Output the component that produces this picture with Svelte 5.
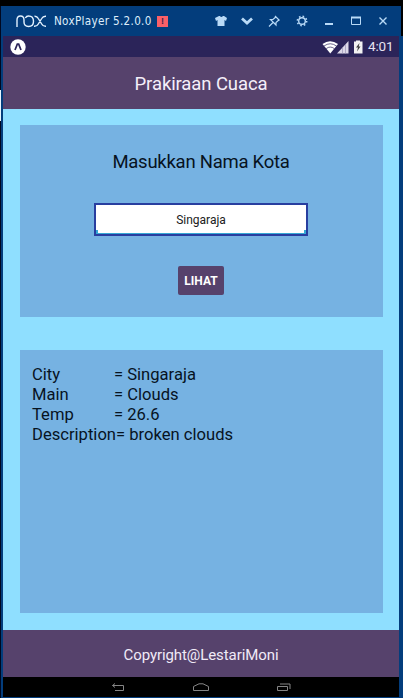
<script>
  let city = $state('Singaraja');
  const rows = [
    ['City', 'Singaraja'],
    ['Main', 'Clouds'],
    ['Temp', '26.6'],
    ['Description', 'broken clouds']
  ];
</script>

<div class="window">
  <div class="titlebar">
    <svg class="logo" width="31" height="13" viewBox="0 0 31 13" fill="none" stroke="#e4f2ff" stroke-width="1.4">
      <path d="M1 12V5Q1 1 4.500 1Q8 1 8 5V7Q8 11.500 12.500 11.500Q17.500 11.500 17.500 6.300Q17.500 1 12.500 1Q10.500 1 9.300 3" />
      <path d="M18.500 1.200Q21 1 22.300 3.500L25.700 9Q27 11.500 30 11.300M30 1.200Q27 1 25.700 3.500L22.300 9Q21 11.500 18 11.300" />
    </svg>
    <span class="name">NoxPlayer 5.2.0.0</span>
    <span class="alert">!</span>
    <svg class="tools" width="176" height="14" viewBox="214 14 176 14" fill="none" stroke="#b9daf7" stroke-width="1.4">
      <path d="M215 18L219 16H220Q221 18 223 16H224L227 18L226 21L224.500 20V26H217.500V20L216 21Z" fill="#b9daf7" stroke="none" />
      <path d="M242 18.500L247 23L252 18.500" stroke-width="2.8" />
      <path d="M275 16L279.500 20.500M275.800 17L273 19.500H270.500L276 25V22.500L278.800 20M273 22.500L269 26.500" stroke-width="1.2" />
      <circle cx="302" cy="21" r="3.300" />
      <circle cx="302" cy="21" r="4.700" stroke-dasharray="1.6 2.09" stroke-width="1.5" />
      <path d="M325 24H333" stroke-width="2" />
      <path d="M351.500 17V24.500H360.500V17" stroke-width="1" />
      <path d="M351 17.500H361" stroke-width="2" />
      <path d="M379.500 17.500L386.500 24.500M386.500 17.500L379.500 24.500" />
    </svg>
  </div>

  <div class="screen">
    <div class="status">
      <svg width="16" height="16" viewBox="0 0 16 16">
        <circle cx="8" cy="8" r="7.700" fill="#fff" />
        <path d="M5 11L7.300 5.200H8.700L11 11" fill="none" stroke="#2b2459" stroke-width="1.700" />
      </svg>
      <svg class="signals" width="41" height="14" viewBox="323 39 41 14">
        <path d="M323.500 43Q331 37.500 339 43L331.300 52.500Z" fill="#fff" />
        <path d="M325 45Q331.300 40.500 337.500 45M327.200 47.600Q331.300 44.500 335.300 47.600" fill="none" stroke="#2b2459" stroke-width=".7" />
        <path d="M338 52.500L349.500 40V52.500Z" fill="#dcd8e8" />
        <path d="M343.500 46V53M346.500 43V53" stroke="#8f89ad" stroke-width=".6" />
        <path d="M355 40.500H357V39.500H361V40.500H363.500V52.500H355Z" fill="#f2f2f2" />
        <path d="M360.500 42L357 46.500H359L358 50.500L361.500 45.500H359.700Z" fill="#3c3c3c" />
      </svg>
      <span class="clock">4:01</span>
    </div>
    <header>Prakiraan Cuaca</header>
    <main>
      <section class="search">
        <label for="city">Masukkan Nama Kota</label>
        <div class="field"><input id="city" bind:value={city} /></div>
        <button>LIHAT</button>
      </section>
      <section class="result">
        {#each rows as [key, value]}
          <div class="row"><span class="key">{key}</span><span>= {value}</span></div>
        {/each}
      </section>
    </main>
    <footer>Copyright@LestariMoni</footer>
    <nav>
      <svg width="14" height="9" viewBox="0 0 14 9" fill="none" stroke="#858585">
        <path d="M4 .5L1.500 2.500L4 4.500M1.500 2.500H12.500V7.500H4" />
      </svg>
      <svg width="16" height="9" viewBox="0 0 16 9" fill="none" stroke="#858585">
        <path d="M.5 7.500V3.500L6 .8H10L15.500 3.500V7.500Z" />
      </svg>
      <svg width="14" height="9" viewBox="0 0 14 9" fill="none" stroke="#858585">
        <path d="M.5 3.500H10.500V7.500H.5ZM3 1H13V6" />
      </svg>
    </nav>
  </div>
</div>

<style>
  .window {
    box-sizing: border-box;
    width: 403px;
    height: 698px;
    padding-bottom: 1px;
    border-top: 6px solid #000;
    background:
      linear-gradient(#000820 0 84px, #e8f6ff 84px 115px, #000820 115px) 0 0 / 1px 100% no-repeat,
      linear-gradient(#000, #000) 100% 0 / 2px 30px no-repeat,
      #033d7c;
    font-family: Roboto, "Liberation Sans", sans-serif;
    overflow: hidden;
  }
  .titlebar {
    box-sizing: border-box;
    height: 30px;
    margin: 0 2px 0 1px;
    padding: 0 11px 0 15px;
    display: flex;
    align-items: center;
    background: #033d7c;
  }
  .name {
    margin-left: 7px;
    width: 98px;
    font: 11.6px/31px "DejaVu Sans Condensed", "DejaVu Sans", sans-serif;
    font-stretch: condensed;
    letter-spacing: 0.32px;
    white-space: nowrap;
    color: #dfedfb;
  }
  .alert {
    margin-left: 5px;
    width: 11px;
    height: 11px;
    background: #fa6068;
    color: #402048;
    font: bold 9px/11px "Liberation Sans", sans-serif;
    text-align: center;
  }
  .tools { margin-left: auto; }
  .screen {
    margin-left: 3px;
    width: 396px;
    height: 661px;
    display: flex;
    flex-direction: column;
  }
  .status {
    height: 21px;
    flex: none;
    display: flex;
    align-items: center;
    padding: 0 6px 0 7px;
    background: #2b2459;
  }
  .signals { margin-left: auto; }
  .clock {
    margin-left: 5px;
    width: 25px;
    font-size: 13.5px;
    line-height: 21px;
    letter-spacing: -0.15px;
    white-space: nowrap;
    color: #e6e2f0;
  }
  header {
    height: 52px;
    flex: none;
    background: #56426c;
    color: #f4effa;
    font-size: 18.5px;
    letter-spacing: -0.1px;
    line-height: 55px;
    text-align: center;
  }
  main {
    flex: 1;
    display: flex;
    flex-direction: column;
    gap: 33px;
    padding: 16px 16px 17px 17px;
    background: #8fdfff;
  }
  section { background: #76b2e2; color: #07131f; }
  .search {
    height: 192px;
    display: flex;
    flex-direction: column;
    align-items: center;
    padding-right: 1px;
  }
  label {
    margin-top: 25px;
    height: 24px;
    font-size: 18.5px;
    letter-spacing: -0.25px;
    line-height: 24px;
  }
  .field {
    box-sizing: border-box;
    width: 214px;
    height: 33px;
    margin-top: 29px;
    border: 2px solid #283e9f;
    background: #fff;
  }
  input {
    box-sizing: border-box;
    display: block;
    width: 100%;
    height: 29px;
    padding: 0 1px;
    border: 0;
    background:
      linear-gradient(#35a8d4, #35a8d4) 0 100% / 100% 1px no-repeat,
      linear-gradient(#35a8d4, #35a8d4) 0 100% / 2px 4px no-repeat,
      linear-gradient(#35a8d4, #35a8d4) 100% 100% / 2px 4px no-repeat;
    font: 12px Roboto, sans-serif;
    text-align: center;
    color: #202020;
    outline: none;
  }
  button {
    width: 46px;
    height: 29px;
    margin-top: 30px;
    padding: 0;
    border: 0;
    border-radius: 2px;
    background: #56426c;
    color: #fff;
    font: bold 12px/30px Roboto, sans-serif;
  }
  .result {
    flex: 1;
    padding: 15px 12px;
    font-size: 16.6px;
    line-height: 20px;
  }
  .row { display: flex; height: 20px; }
  .key { min-width: 82px; }
  footer {
    height: 47px;
    flex: none;
    background: #56426c;
    color: #f0eaf7;
    font-size: 15px;
    letter-spacing: -0.08px;
    line-height: 50px;
    text-align: center;
  }
  nav {
    box-sizing: border-box;
    height: 20px;
    padding-top: 1px;
    flex: none;
    display: flex;
    align-items: center;
    justify-content: center;
    gap: 68px;
    background: #000;
  }
</style>
